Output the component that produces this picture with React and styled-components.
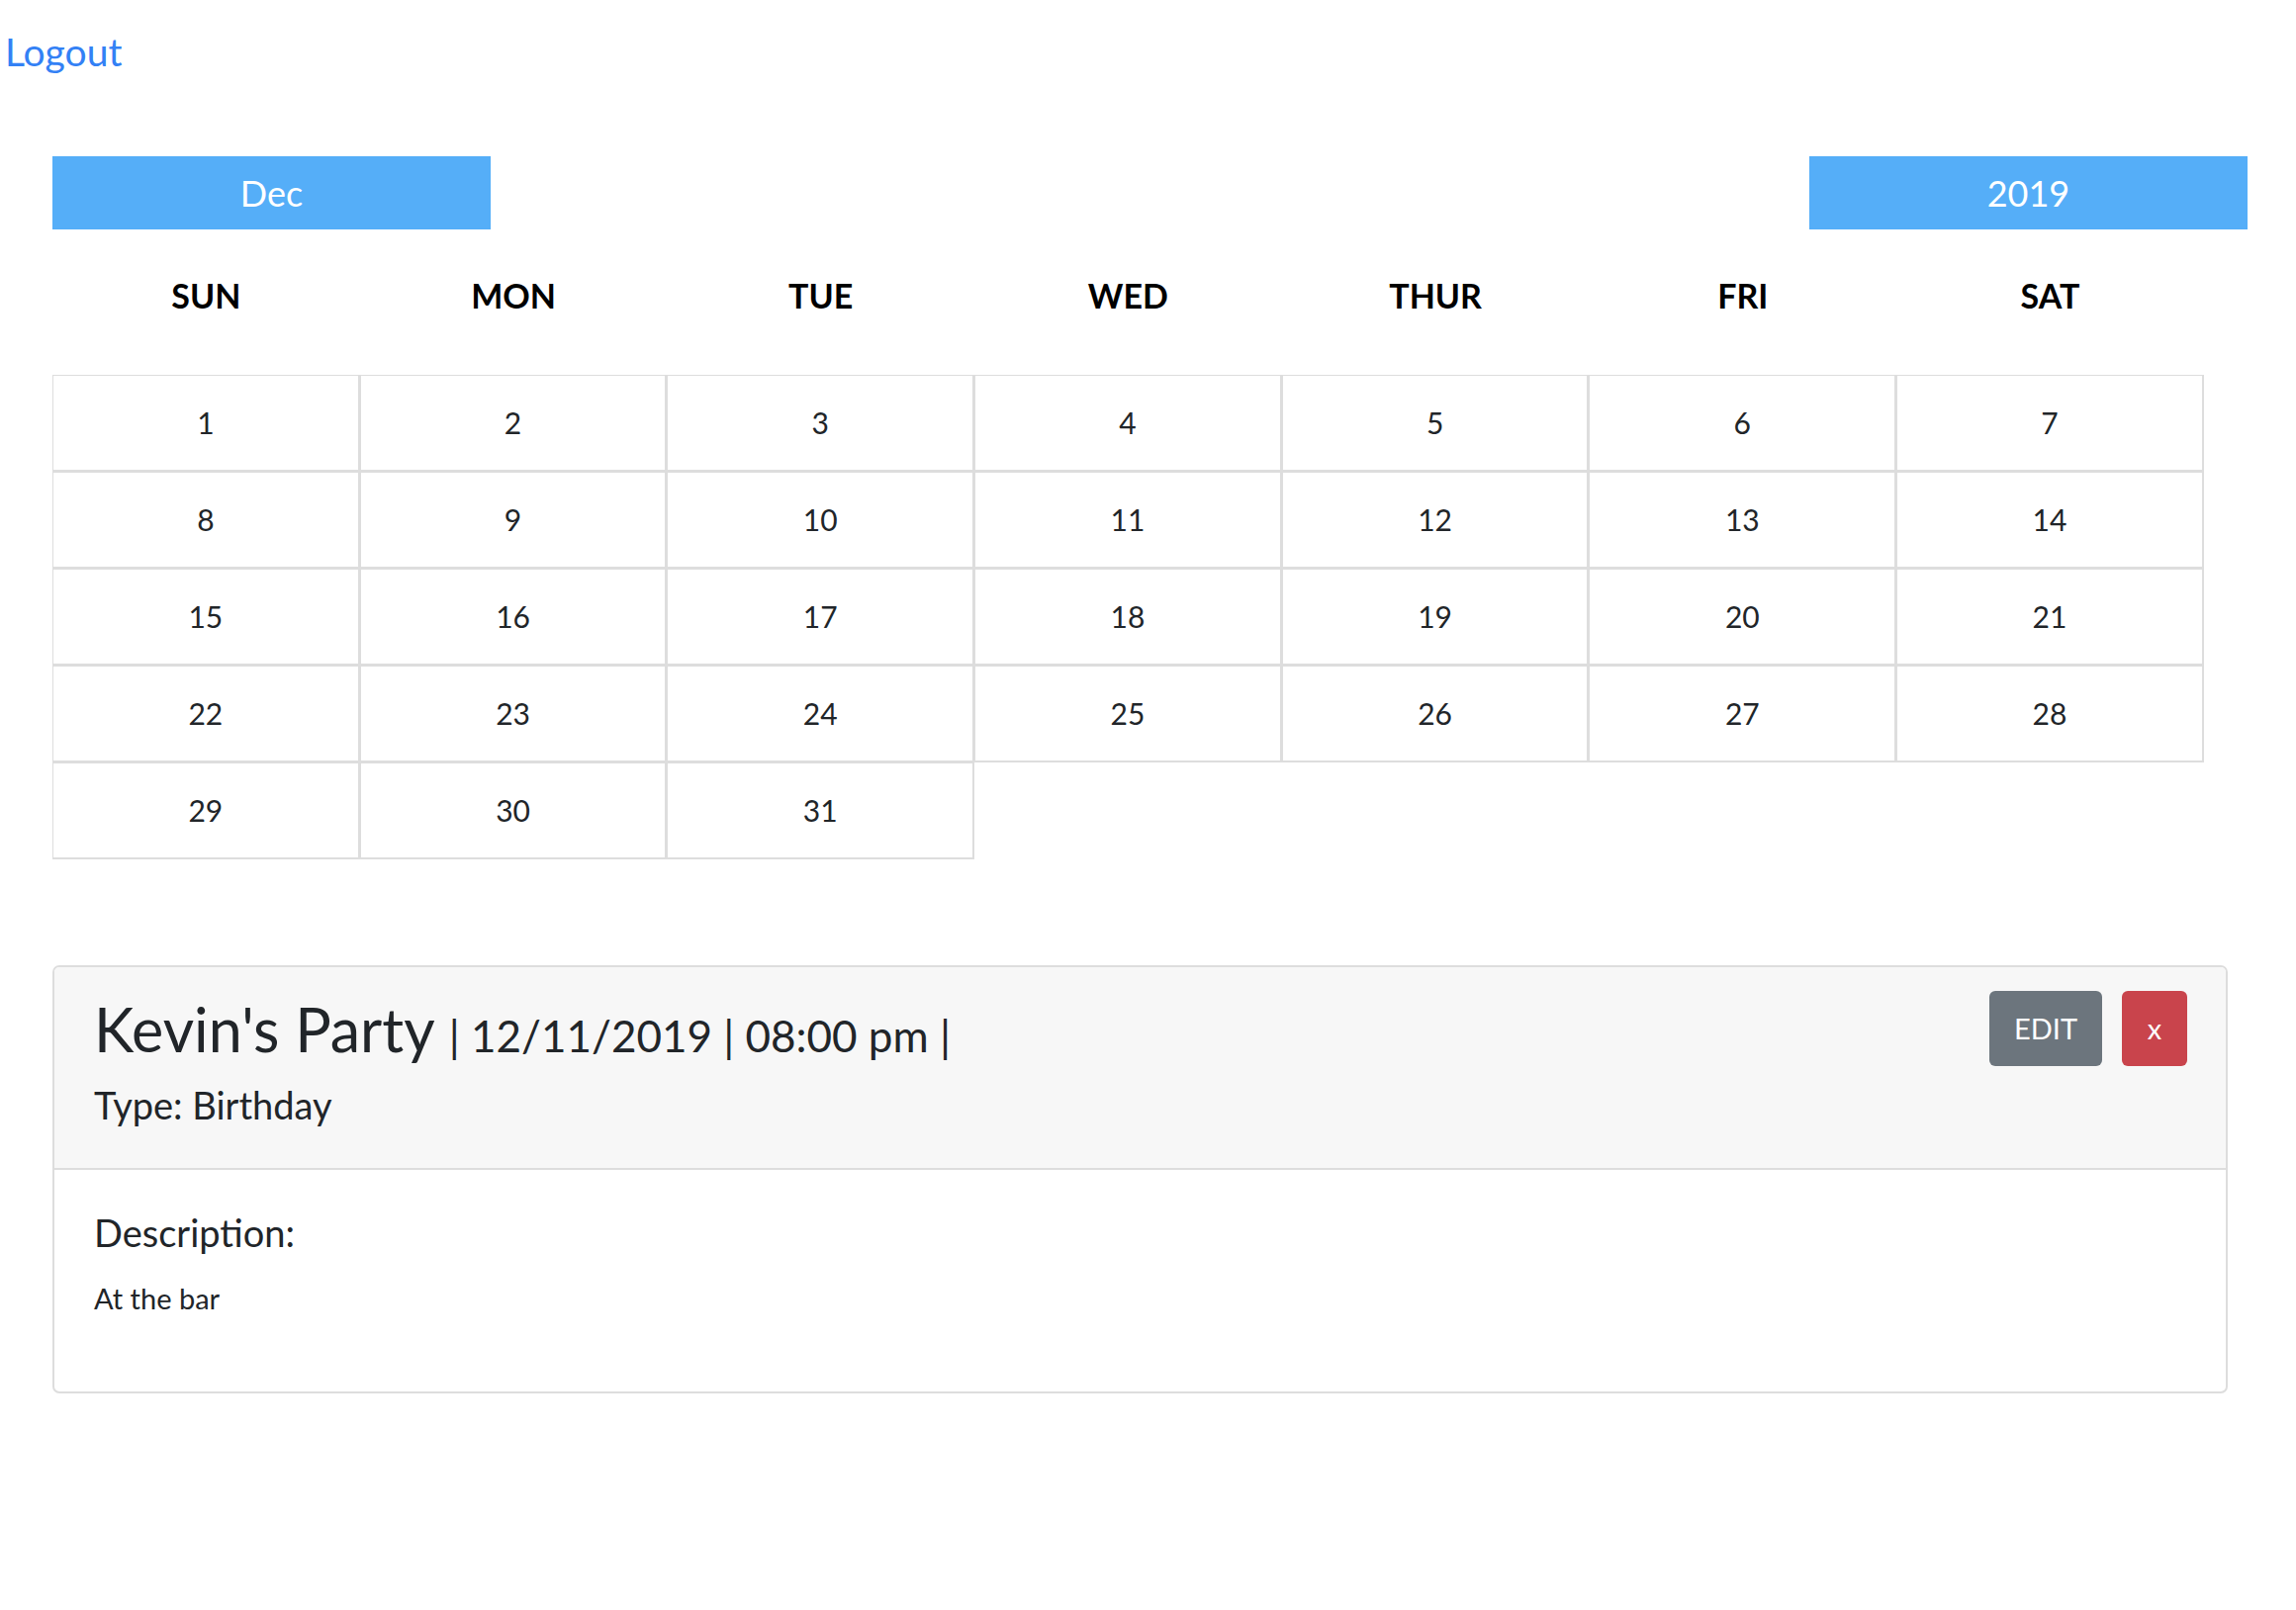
import styled, { createGlobalStyle } from "styled-components";

const GlobalStyle = createGlobalStyle`
  body {
    margin: 0;
    background: #fff;
    font-family: "Source Sans Pro", Lato, "Noto Sans", sans-serif;
    color: #212529;
  }
  *, *::before, *::after {
    box-sizing: border-box;
  }
`;

const weekdays = ["SUN", "MON", "TUE", "WED", "THUR", "FRI", "SAT"];
const days = Array.from({ length: 31 }, (_, i) => i + 1);

export default function App() {
  return (
    <>
      <GlobalStyle />
      <TopBar>
        <LogoutLink href="#">Logout</LogoutLink>
      </TopBar>

      <Calendar>
        <MonthRow>
          <Picker>Dec</Picker>
          <Picker>2019</Picker>
        </MonthRow>

        <WeekRow>
          {weekdays.map((d) => (
            <WeekDay key={d}>{d}</WeekDay>
          ))}
        </WeekRow>

        <DayGrid>
          {days.map((d) => (
            <DayCell key={d}>{d}</DayCell>
          ))}
        </DayGrid>
      </Calendar>

      <EventCard>
        <CardHeader>
          <HeaderRow>
            <Title>
              Kevin's Party <Meta>| 12/11/2019 | 08:00 pm |</Meta>
            </Title>
            <Actions>
              <Button $variant="secondary">EDIT</Button>
              <Button $variant="danger" $narrow>
                x
              </Button>
            </Actions>
          </HeaderRow>
          <TypeLine>Type: Birthday</TypeLine>
        </CardHeader>
        <CardBody>
          <Label>Description:</Label>
          <Description>At the bar</Description>
        </CardBody>
      </EventCard>
    </>
  );
}

const TopBar = styled.div`
  padding: 29px 0 0 5px;
`;

const LogoutLink = styled.a`
  font-size: 39px;
  line-height: 1.2;
  color: #3381f5;
  text-decoration: none;
`;

const Calendar = styled.section`
  margin: 82px 0 0 53px;
  width: 2219px;
`;

const MonthRow = styled.div`
  display: flex;
  justify-content: space-between;
`;

const Picker = styled.div`
  width: 443px;
  height: 74px;
  display: flex;
  align-items: center;
  justify-content: center;
  background: #55aef8;
  color: #fff;
  font-size: 36px;
`;

const WeekRow = styled.div`
  display: grid;
  grid-template-columns: repeat(7, 310.7px);
  height: 147px;
  padding-top: 47px;
`;

const WeekDay = styled.div`
  text-align: center;
  font-size: 34px;
  font-weight: 700;
  line-height: 1.2;
  color: #000;
`;

const DayGrid = styled.div`
  display: grid;
  grid-template-columns: repeat(7, 310.7px);
  grid-auto-rows: 98px;
`;

const DayCell = styled.div`
  display: flex;
  align-items: center;
  justify-content: center;
  font-size: 30px;
  border-style: solid;
  border-color: #dddddd;
  border-width: 1px 2px 2px 1px;
`;

const EventCard = styled.div`
  margin: 107px 0 0 53px;
  width: 2199px;
  border: 2px solid #dddddd;
  border-radius: 7px;
  overflow: hidden;
`;

const CardHeader = styled.div`
  background: #f7f7f7;
  border-bottom: 2px solid #dddddd;
  padding: 26px 39px 41px 40px;
`;

const HeaderRow = styled.div`
  display: flex;
  justify-content: space-between;
  align-items: flex-start;
`;

const Title = styled.h2`
  margin: 0;
  font-size: 61px;
  font-weight: 400;
  line-height: 1.2;
`;

const Meta = styled.span`
  font-size: 44px;
`;

const Actions = styled.div`
  display: flex;
  gap: 20px;
  margin-top: -2px;
`;

const Button = styled.button`
  height: 76px;
  width: ${(p) => (p.$narrow ? "66px" : "114px")};
  border: none;
  border-radius: 6px;
  color: #fff;
  font-family: inherit;
  font-size: 29px;
  background: ${(p) => (p.$variant === "danger" ? "#c9444c" : "#6c757d")};
  cursor: pointer;
`;

const TypeLine = styled.div`
  margin-top: 17px;
  font-size: 38px;
  line-height: 1.2;
`;

const CardBody = styled.div`
  padding: 41px 40px 76px;
`;

const Label = styled.div`
  font-size: 38px;
  line-height: 1.2;
`;

const Description = styled.div`
  margin-top: 26px;
  font-size: 29px;
  line-height: 1.2;
`;
